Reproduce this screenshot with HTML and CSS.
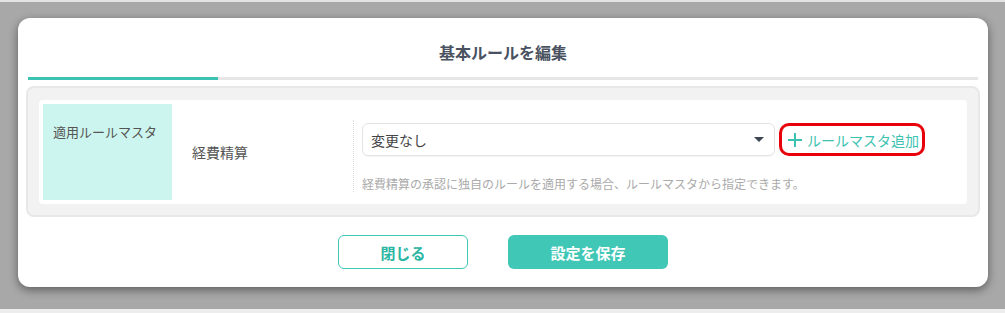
FILE: index.html
```html
<!DOCTYPE html>
<html lang="ja">
<head>
  <meta charset="UTF-8" />
  <meta name="viewport" content="width=device-width, initial-scale=1.0" />
  <title>基本ルールを編集</title>
  <link rel="stylesheet" href="styles.css">
</head>
<body>
  <div class="modal">
    <h1 class="modal-title">基本ルールを編集</h1>

    <div class="tabs">
      <div class="tab active"></div>
      <div class="tab"></div>
    </div>

    <div class="panel">
      <div class="card">
        <div class="row">
          <div class="row-label">適用ルールマスタ</div>
          <div class="row-name">経費精算</div>
          <div class="row-field">
            <div class="field-line">
              <div class="select">
                <span>変更なし</span>
                <span class="caret"></span>
              </div>
              <button class="add-button">
                <svg width="16" height="16" viewBox="0 0 16 16"><path d="M8 1v14M1 8h14" stroke="#3cc2b0" stroke-width="2" fill="none"/></svg>
                ルールマスタ追加
              </button>
            </div>
            <p class="help">経費精算の承認に独自のルールを適用する場合、ルールマスタから指定できます。</p>
          </div>
        </div>
      </div>
    </div>

    <div class="actions">
      <button class="btn btn-outline">閉じる</button>
      <button class="btn btn-primary">設定を保存</button>
    </div>
  </div>
</body>
</html>
```

FILE: styles.css
```css
* {
  box-sizing: border-box;
}

body {
  margin: 0;
  height: 313px;
  background: #a8a8a8;
  border-top: 2px solid #e4e4e4;
  border-bottom: 4px solid #ededed;
  font-family: "Noto Sans CJK JP", "Noto Sans", sans-serif;
  overflow: hidden;
}

.modal {
  width: 970px;
  height: 269px;
  margin: 16px 0 0 18px;
  padding: 0 10px;
  background: #fff;
  border-radius: 12px;
  box-shadow: 0 3px 10px rgba(0, 0, 0, 0.45);
}

.modal-title {
  margin: 0;
  height: 59px;
  padding-top: 23px;
  font-size: 16px;
  line-height: 22px;
  font-weight: bold;
  color: #4a5262;
  text-align: center;
}

.tabs {
  display: flex;
  height: 3px;
}

.tab {
  flex: 1;
  background: #e6e6e6;
}

.tab.active {
  flex: 0 0 190px;
  background: #3cc2b0;
}

.panel {
  margin: 6px -2px 0;
  padding: 12px 11px 11px;
  background: #f2f2f2;
  border: 2px solid #e8e8e8;
  border-radius: 8px;
}

.card {
  background: #fff;
  border-radius: 4px;
  padding: 4px;
}

.row {
  display: flex;
  align-items: center;
  height: 96px;
}

.row-label {
  align-self: stretch;
  width: 129px;
  padding: 20px 0 0 10px;
  background: #cdf5ef;
  font-size: 13px;
  line-height: 16px;
  color: #555;
}

.row-name {
  width: 181px;
  padding-left: 20px;
  font-size: 14px;
  color: #555;
}

.row-field {
  border-left: 1px dotted #dcdcdc;
  padding: 3px 0 0 8px;
  margin-top: 8px;
}

.field-line {
  display: flex;
  gap: 4px;
}

.select {
  display: flex;
  align-items: center;
  justify-content: space-between;
  width: 413px;
  height: 33px;
  padding: 0 10px 0 8px;
  border: 1px solid #e3e3e3;
  border-radius: 6px;
  box-shadow: 0 1px 1px rgba(0, 0, 0, 0.04);
  font-size: 14px;
  color: #444;
}

.caret {
  width: 0;
  height: 0;
  border-left: 5px solid transparent;
  border-right: 5px solid transparent;
  border-top: 5px solid #3d4452;
}

.add-button {
  display: flex;
  align-items: center;
  gap: 4px;
  width: 146px;
  height: 33px;
  padding: 0 0 0 5px;
  background: #fff;
  border: 3px solid #e8000b;
  border-radius: 10px;
  font-family: inherit;
  font-size: 14px;
  color: #3cc2b0;
  white-space: nowrap;
}

.help {
  margin: 20px 0 0;
  font-size: 12px;
  line-height: 16px;
  color: #aaa;
}

.actions {
  display: flex;
  justify-content: center;
  gap: 40px;
  margin-top: 18px;
}

.btn {
  height: 34px;
  border-radius: 6px;
  font-family: inherit;
  font-size: 15px;
  font-weight: bold;
}

.btn-outline {
  width: 130px;
  background: #fff;
  border: 1px solid #41c7b6;
  color: #2bb5a3;
}

.btn-primary {
  width: 160px;
  background: #41c7b6;
  border: none;
  color: #fff;
}
```
